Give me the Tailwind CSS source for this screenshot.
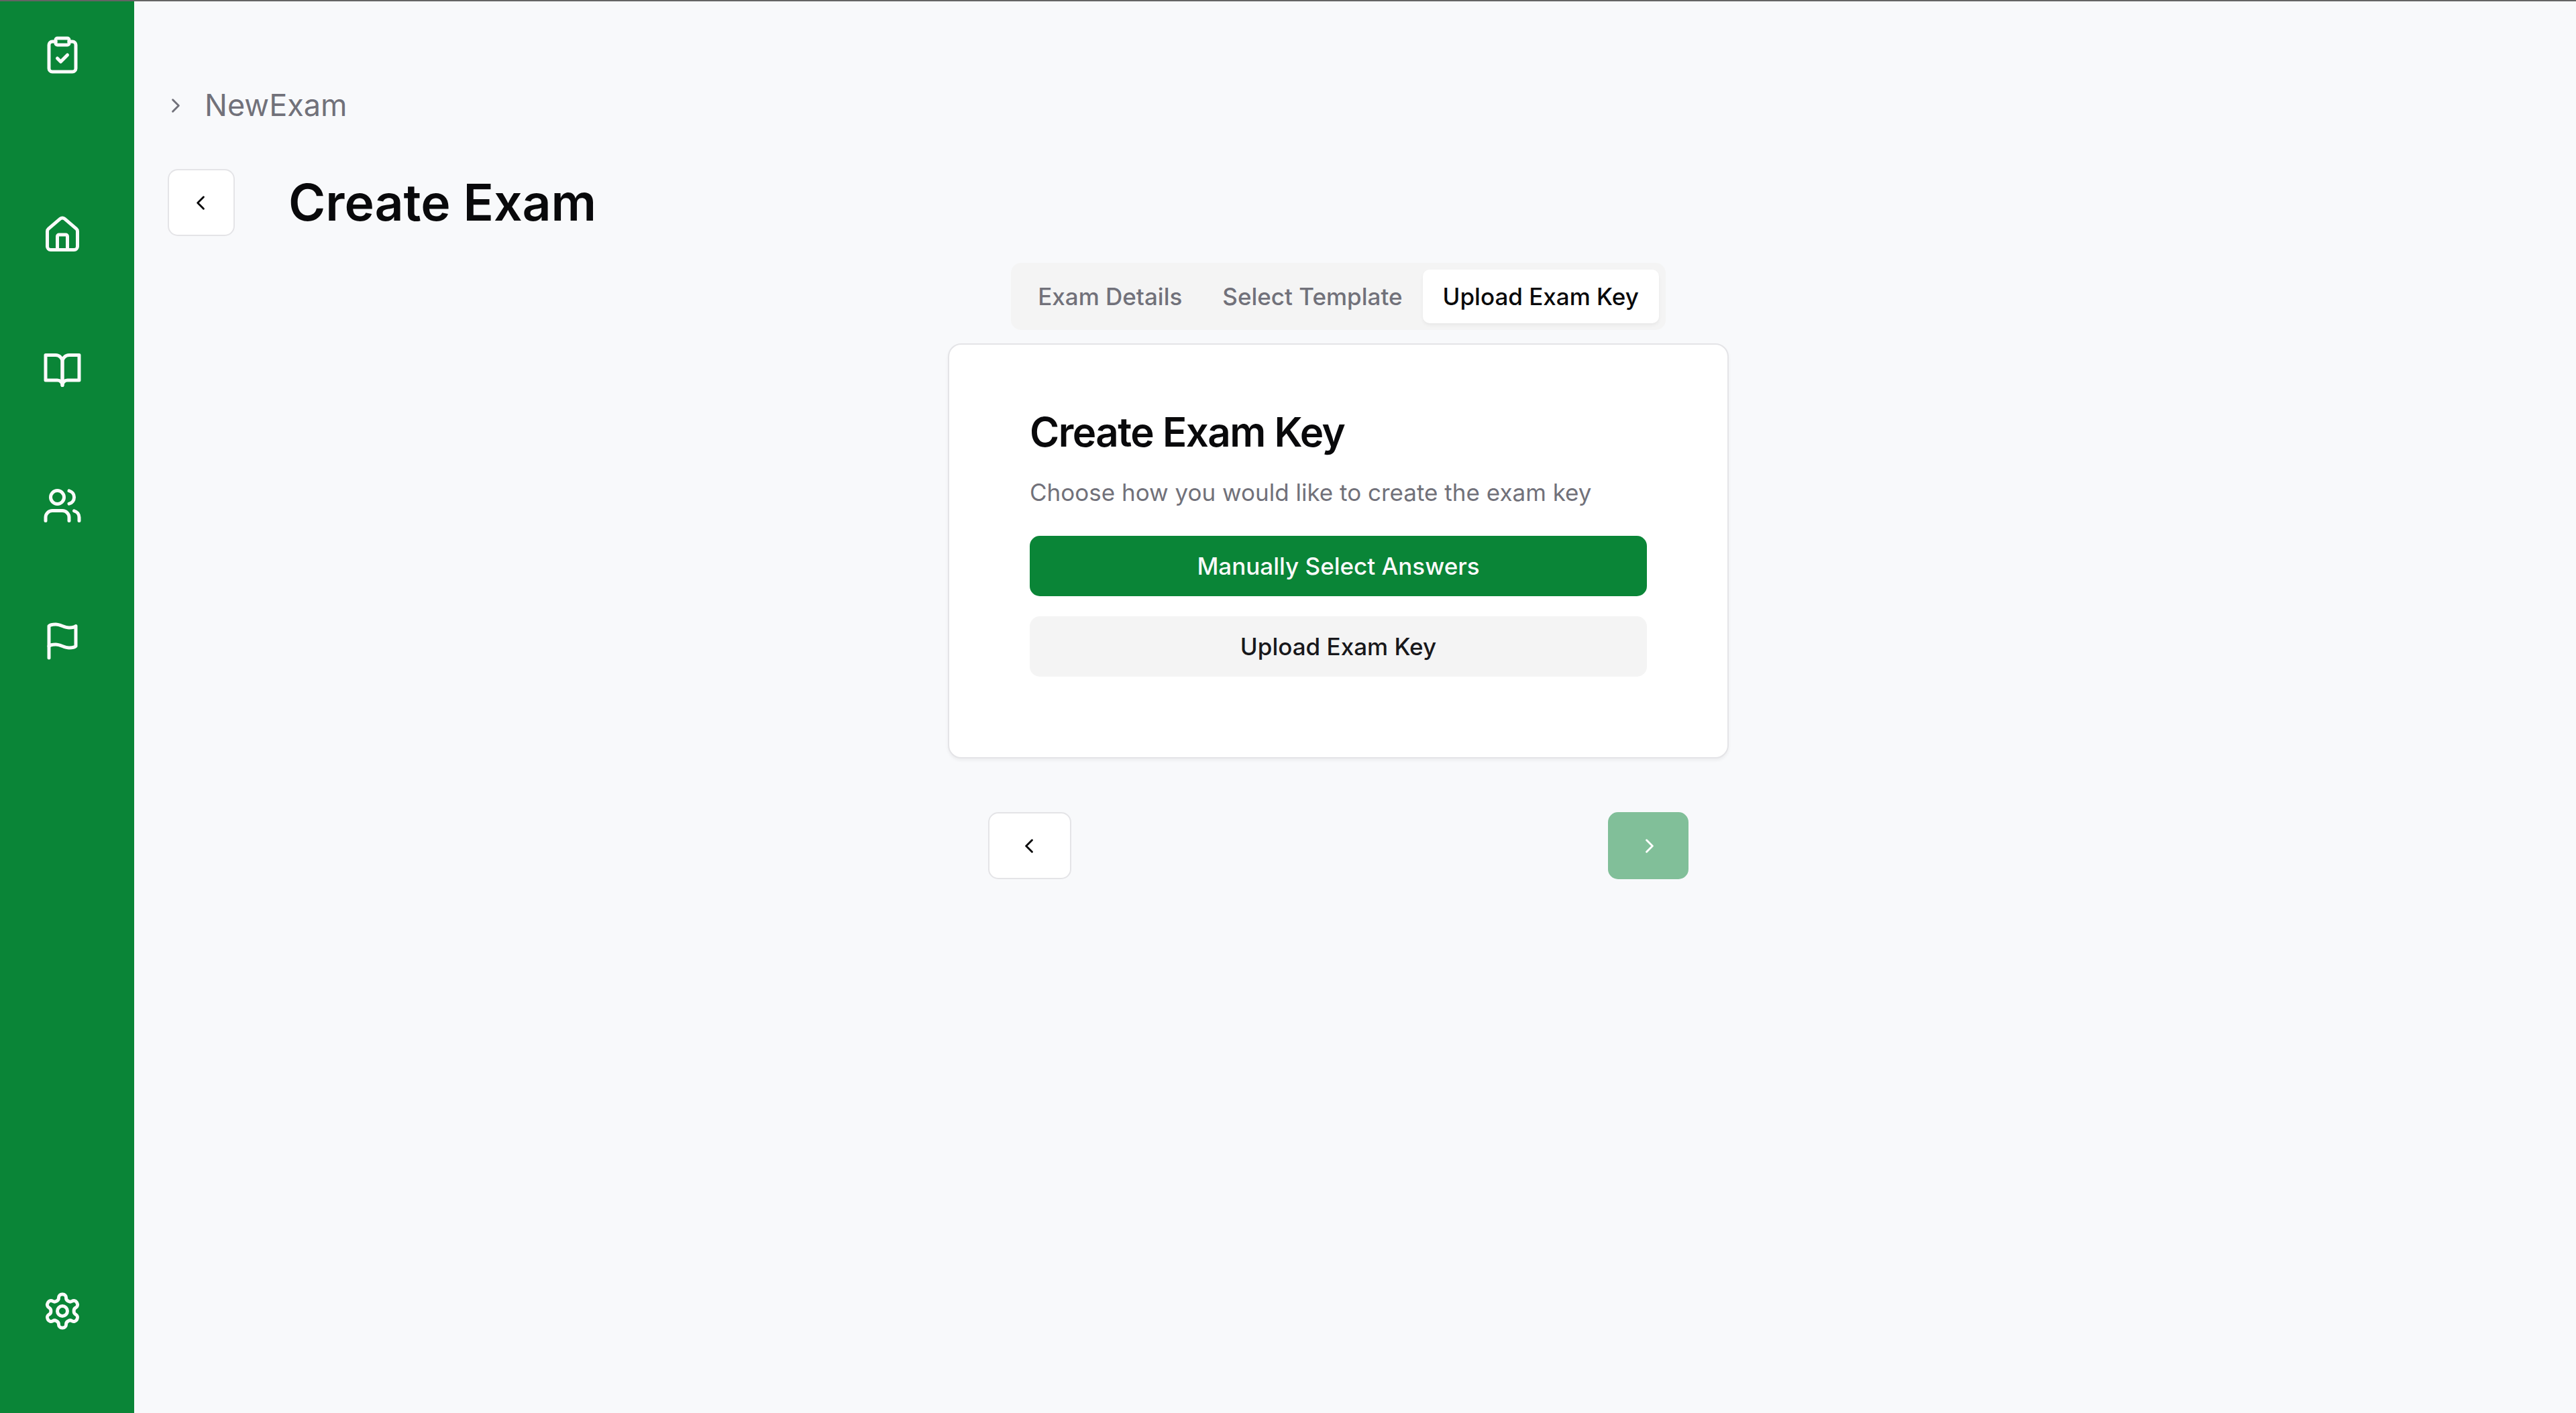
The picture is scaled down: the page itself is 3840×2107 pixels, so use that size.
<!DOCTYPE html>
<html lang="en">
<head>
<meta charset="utf-8">
<meta name="viewport" content="width=device-width, initial-scale=1">
<title>Create Exam</title>
<script src="https://cdn.jsdelivr.net/npm/@tailwindcss/browser@4"></script>
</head>
<body class="flex min-h-screen flex-col border-t-2 border-[#646464] bg-[#f8f9fb] font-['Inter',sans-serif] text-[35px] leading-[50px] text-[#09090b]">
<svg class="hidden" aria-hidden="true">
  <symbol id="left" viewBox="0 0 24 24"><path fill="none" stroke="currentColor" stroke-width="2" stroke-linecap="round" stroke-linejoin="round" d="m14 18-6-6 6-6"/></symbol>
  <symbol id="right" viewBox="0 0 24 24"><path fill="none" stroke="currentColor" stroke-width="2" stroke-linecap="round" stroke-linejoin="round" d="m10 18 6-6-6-6"/></symbol>
</svg>
<div class="flex grow">
  <aside class="flex w-[200px] shrink-0 flex-col bg-[#0a8537] pt-[50px] pr-[14px] pb-[122px] text-[#fafafa]">
    <a href="#" aria-label="Exams" class="mx-auto"><svg class="size-[60px]" viewBox="0 0 24 24" fill="none" stroke="currentColor" stroke-width="2" stroke-linecap="round" stroke-linejoin="round"><rect width="8" height="4" x="8" y="2" rx="1"/><path d="M16 4h2a2 2 0 0 1 2 2v14a2 2 0 0 1-2 2H6a2 2 0 0 1-2-2V6a2 2 0 0 1 2-2h2"/><path d="m9 14 2 2 4-4"/></svg></a>
    <nav class="mt-[208px] flex grow flex-col items-center gap-[142px]">
      <a href="#" aria-label="Home"><svg class="size-[60px]" viewBox="0 0 24 24" fill="none" stroke="currentColor" stroke-width="2" stroke-linecap="round" stroke-linejoin="round"><path d="M15 21v-8a1 1 0 0 0-1-1h-4a1 1 0 0 0-1 1v8"/><path d="M3 10a2 2 0 0 1 .709-1.528l7-5.999a2 2 0 0 1 2.582 0l7 5.999A2 2 0 0 1 21 10v9a2 2 0 0 1-2 2H5a2 2 0 0 1-2-2z"/></svg></a>
      <a href="#" aria-label="Library"><svg class="size-[60px]" viewBox="0 0 24 24" fill="none" stroke="currentColor" stroke-width="2" stroke-linecap="round" stroke-linejoin="round"><path d="M2 3h6a4 4 0 0 1 4 4v14a3 3 0 0 0-3-3H2z"/><path d="M22 3h-6a4 4 0 0 0-4 4v14a3 3 0 0 1 3-3h7z"/></svg></a>
      <a href="#" aria-label="Students"><svg class="size-[60px]" viewBox="0 0 24 24" fill="none" stroke="currentColor" stroke-width="2" stroke-linecap="round" stroke-linejoin="round"><path d="M16 21v-2a4 4 0 0 0-4-4H6a4 4 0 0 0-4 4v2"/><circle cx="9" cy="7" r="4"/><path d="M22 21v-2a4 4 0 0 0-3-3.87"/><path d="M16 3.13a4 4 0 0 1 0 7.75"/></svg></a>
      <a href="#" aria-label="Reports"><svg class="size-[60px]" viewBox="0 0 24 24" fill="none" stroke="currentColor" stroke-width="2" stroke-linecap="round" stroke-linejoin="round"><path d="M4 15s1-1 4-1 5 2 8 2 4-1 4-1V3s-1 1-4 1-5-2-8-2-4 1-4 1z"/><path d="M4 22v-7"/></svg></a>
      <a href="#" aria-label="Settings" class="mt-auto"><svg class="size-[60px]" viewBox="0 0 24 24" fill="none" stroke="currentColor" stroke-width="2" stroke-linecap="round" stroke-linejoin="round"><path d="M12.22 2h-.44a2 2 0 0 0-2 2v.18a2 2 0 0 1-1 1.73l-.43.25a2 2 0 0 1-2 0l-.15-.08a2 2 0 0 0-2.73.73l-.22.38a2 2 0 0 0 .73 2.73l.15.1a2 2 0 0 1 1 1.72v.51a2 2 0 0 1-1 1.74l-.15.09a2 2 0 0 0-.73 2.73l.22.38a2 2 0 0 0 2.73.73l.15-.08a2 2 0 0 1 2 0l.43.25a2 2 0 0 1 1 1.73V20a2 2 0 0 0 2 2h.44a2 2 0 0 0 2-2v-.18a2 2 0 0 1 1-1.73l.43-.25a2 2 0 0 1 2 0l.15.08a2 2 0 0 0 2.73-.73l.22-.39a2 2 0 0 0-.73-2.73l-.15-.08a2 2 0 0 1-1-1.74v-.5a2 2 0 0 1 1-1.74l.15-.09a2 2 0 0 0 .73-2.73l-.22-.38a2 2 0 0 0-2.73-.73l-.15.08a2 2 0 0 1-2 0l-.43-.25a2 2 0 0 1-1-1.73V4a2 2 0 0 0-2-2z"/><circle cx="12" cy="12" r="3"/></svg></a>
    </nav>
  </aside>
  <main class="grow pt-[120px] pr-[100px] pl-[50px]">
    <nav aria-label="Breadcrumb" class="-ml-[7px] flex items-center gap-[27px] text-[45px] leading-[70px] text-[#71717a]">
      <svg class="size-[35px]" viewBox="0 0 24 24"><use href="#right"/></svg>
      <a href="#">NewExam</a>
    </nav>
    <div class="mt-[60px] flex items-center gap-[80px]">
      <button aria-label="Back" class="flex size-[100px] items-center justify-center rounded-[15px] border-2 border-[#e4e4e7] bg-white"><svg class="size-[35px]" viewBox="0 0 24 24"><use href="#left"/></svg></button>
      <h1 class="text-[75px] leading-[90px] font-semibold">Create Exam</h1>
    </div>
    <div class="mt-[40px] flex flex-col items-center">
      <div role="tablist" class="flex h-[100px] rounded-[15px] bg-[#f4f4f4] p-[10px] font-medium text-[#71717a]">
        <button role="tab" class="rounded-[10px] px-[30px]">Exam Details</button>
        <button role="tab" class="rounded-[10px] px-[30px]">Select Template</button>
        <button role="tab" aria-selected="true" class="rounded-[10px] bg-white px-[30px] text-[#09090b] shadow-[0_3px_5px_rgb(0_0_0/0.05)]">Upload Exam Key</button>
      </div>
      <section class="mt-[20px] flex w-[1164px] flex-col rounded-[20px] border-2 border-[#e4e4e7] bg-white px-[120px] pt-[90px] pb-[120px] shadow-[0_3px_5px_rgb(0_0_0/0.05)]">
        <h2 class="text-[60px] leading-[80px] font-semibold tracking-tight">Create Exam Key</h2>
        <p class="mt-[25px] text-[#71717a]">Choose how you would like to create the exam key</p>
        <button class="mt-[40px] h-[90px] rounded-[15px] bg-[#0a8537] font-medium text-[#fafafa]">Manually Select Answers</button>
        <button class="mt-[30px] h-[90px] rounded-[15px] bg-[#f4f4f4] font-medium text-[#18181b]">Upload Exam Key</button>
      </section>
      <div class="mt-[80px] flex w-[1044px] justify-between">
        <button aria-label="Previous" class="flex h-[100px] w-[124px] items-center justify-center rounded-[15px] border-2 border-[#e4e4e7] bg-white"><svg class="size-[35px]" viewBox="0 0 24 24"><use href="#left"/></svg></button>
        <button aria-label="Next" disabled class="flex h-[100px] w-[120px] items-center justify-center rounded-[15px] bg-[#0a8537]/50 text-white"><svg class="size-[35px]" viewBox="0 0 24 24"><use href="#right"/></svg></button>
      </div>
    </div>
  </main>
</div>
</body>
</html>
